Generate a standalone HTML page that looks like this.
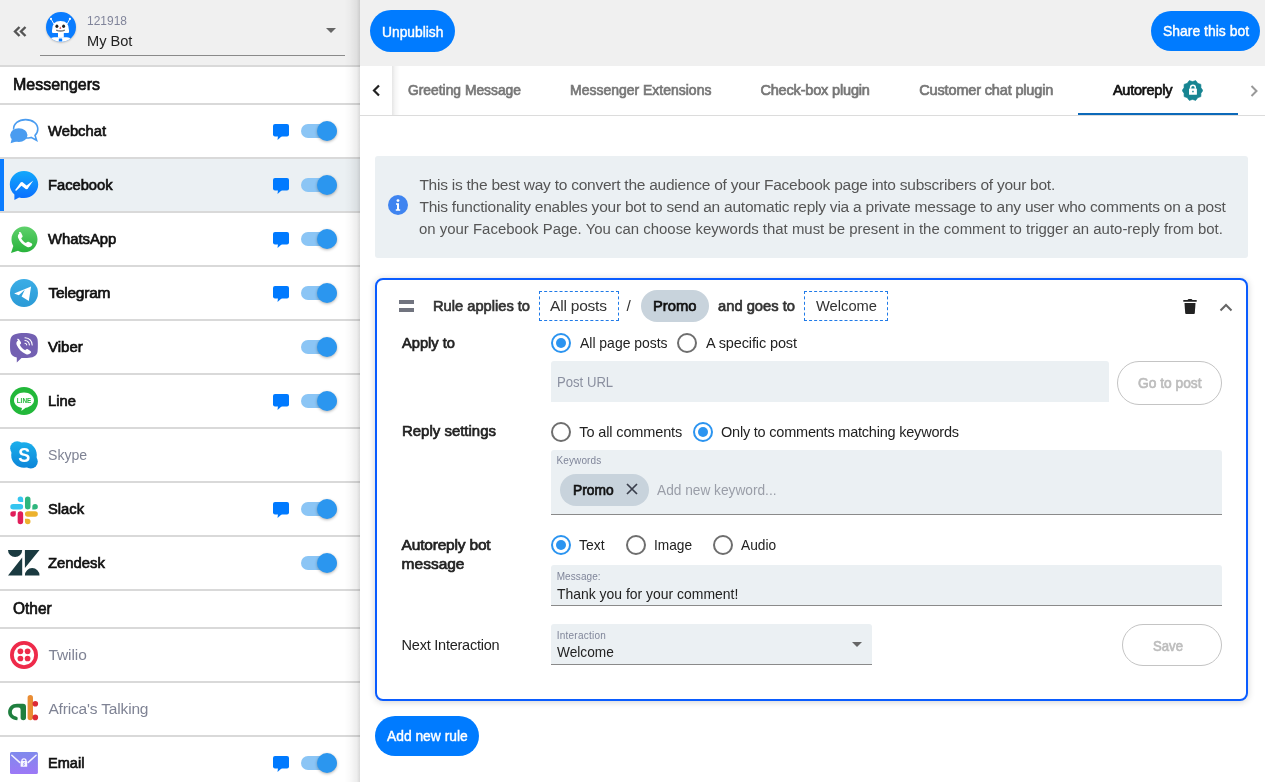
<!DOCTYPE html>
<html><head><meta charset="utf-8"><style>*{box-sizing:border-box;margin:0;padding:0}
html,body{width:1265px;height:782px;overflow:hidden;background:#fff;font-family:"Liberation Sans",sans-serif;color:#222}
.a{position:absolute}
.t{position:absolute;white-space:nowrap;line-height:20px}
#sb{position:absolute;left:0;top:0;width:360px;height:782px;background:#fff;overflow:hidden}
#sbh{position:absolute;left:0;top:0;width:360px;height:67px;background:#f0f0f0;border-bottom:2px solid #d9d9d9}
.sec{position:absolute;left:0;width:360px;height:38px;border-bottom:2px solid #d9d9d9}
.row{position:absolute;left:0;width:360px;height:54px;border-bottom:2px solid #d9d9d9}
.ic{position:absolute;left:8px;top:12px;width:32px;height:30px}
.row.sel{background:#ebf0f3}
.row.sel:before{content:"";position:absolute;left:0;top:0;width:4px;height:52px;background:#0a7cff}
.bub{position:absolute;left:273px;top:19px;width:16px;height:16px}
.tg{position:absolute;left:301px;top:19px;width:36px;height:14px;border-radius:7px;background:#8bc5f5}
.tg:after{content:"";position:absolute;left:16px;top:-3px;width:20px;height:20px;border-radius:50%;background:#2b96ef;box-shadow:0 1px 3px rgba(0,0,0,.3)}
#shade{position:absolute;left:344px;top:0;width:16px;height:782px;background:linear-gradient(to right,rgba(0,0,0,0),rgba(0,0,0,.02) 35%,rgba(0,0,0,.07) 80%,rgba(0,0,0,.15))}
.btn{position:absolute;background:#007bff;border-radius:21px}
.radio{position:absolute;width:20px;height:20px;border-radius:50%;border:2px solid #6e6e6e}
.radio.on{border-color:#2b94f0}
.radio.on:after{content:"";position:absolute;left:3px;top:3px;width:10px;height:10px;border-radius:50%;background:#2b94f0}
.fld{position:absolute;background:#ebf0f3;border-radius:3px 3px 0 0}
.fld.ul{border-bottom:1px solid #8a8a8a}
.ob{position:absolute;border:1px solid #c4c4c4}
</style></head><body>
<div id="root" style="position:absolute;left:0;top:0;width:1265px;height:782px;overflow:hidden;will-change:transform;background:#fff">
<div id="sb"><div id="sbh"></div><svg class="a" style="left:13px;top:26px" width="14" height="11" viewBox="0 0 14 11"><path d="M6.5 1 2 5.5 6.5 10M12.5 1 8 5.5 12.5 10" fill="none" stroke="#555" stroke-width="2.4"/></svg><div class="a" style="left:46px;top:12px;width:30px;height:30px;border-radius:50%;background:#0a7cff;overflow:hidden;box-shadow:0 1px 2px rgba(0,0,0,.2)"><svg width="30" height="30" viewBox="0 0 30 30"><path d="M5 6.9 8 12.2M23.9 6.9 21 12.2" stroke="#fff" stroke-width="0.9"/><circle cx="5" cy="6.9" r="1.1" fill="#fff"/><circle cx="23.9" cy="6.9" r="1.1" fill="#fff"/><path d="M6 18.5Q6 9.1 14.5 9.1Q23 9.1 23 18.5V20Q23 21 22 21H7Q6 21 6 20Z" fill="#fff"/><ellipse cx="10.9" cy="14.3" rx="1.5" ry="1.8" fill="#222"/><ellipse cx="17.6" cy="14.3" rx="1.5" ry="1.8" fill="#222"/><path d="M13.3 16.8 14.3 14.5 15.3 16.8Z" fill="#e8312f"/><path d="M10.2 18.1Q14.5 20 18.8 18.1" stroke="#777" fill="none" stroke-width="1.4"/><rect x="12" y="20.5" width="5.8" height="5" fill="#fff"/><path d="M4.5 31V27Q5 25.2 8 25.2H21Q24 25.2 24.5 27V31Z" fill="#fff"/><rect x="12.8" y="26.5" width="3.4" height="3" rx=".5" fill="#0a7cff"/></svg></div><div class="t" style="left:87.40px;top:11px;font-size:12.4px;color:#80849a;transform:scaleX(0.9662);transform-origin:0 0;">121918</div>
<div class="t" style="left:87.40px;top:31px;font-size:15.5px;color:#222;transform:scaleX(0.9419);transform-origin:0 0;">My Bot</div>
<svg class="a" style="left:326px;top:28px" width="10" height="5" viewBox="0 0 10 5"><path d="M0 0H10L5 5Z" fill="#666"/></svg><div class="a" style="left:40px;top:55px;width:305px;height:1px;background:#8a8a8a"></div><div class="sec" style="top:67px"></div><div class="t" style="left:12.80px;top:74px;font-size:16.5px;color:#111;transform:scaleX(0.9677);transform-origin:0 0;-webkit-text-stroke:0.7px #111;">Messengers</div>
<div class="sec" style="top:591px"></div><div class="t" style="left:12.50px;top:598px;font-size:16.5px;color:#111;transform:scaleX(0.9370);transform-origin:0 0;-webkit-text-stroke:0.7px #111;">Other</div>
<div class="row" style="top:105px"><svg class="ic" viewBox="0 0 32 30"><g transform="translate(0 0.8)"><path d="M5.6 11.8 C5.2 6 10.5 1.8 17.6 1.8 C24.8 1.8 29.8 5.8 29.8 11.3 C29.8 14 28.8 16 27 17.5 L28.6 22.5 L23 19.6 C21.5 20 20 20.2 18 20.2" fill="none" stroke="#4a9cf0" stroke-width="1.6"/><ellipse cx="10.8" cy="17.3" rx="8.7" ry="6.8" fill="#4a9cf0"/><path d="M3.8 21 2.6 25.5 9 23.5Z" fill="#4a9cf0"/></g></svg><svg class="bub" viewBox="0 0 16 16"><rect x="0" y="0" width="16" height="12.5" rx="2" fill="#007aff"/><path d="M5 12 4.5 16 9 12Z" fill="#007aff"/></svg><div class="tg"></div></div><div class="t" style="left:48.40px;top:121px;font-size:15.5px;color:#111;transform:scaleX(0.9524);transform-origin:0 0;-webkit-text-stroke:0.7px #111;">Webchat</div>
<div class="row sel" style="top:159px"><svg class="ic" viewBox="0 0 32 30"><defs><linearGradient id="fb" x1="0" y1="0" x2="0" y2="1"><stop offset="0" stop-color="#12a8fb"/><stop offset="1" stop-color="#0a6cff"/></linearGradient></defs><path d="M16 0C8.1 0 1.8 6 1.8 13.6c0 4 1.8 7.5 4.6 9.9V29l4.7-2.5c1.5.4 3.1.6 4.9.6 7.9 0 14.2-6 14.2-13.5S23.9 0 16 0Z" fill="url(#fb)"/><path d="M7 19.2 12.8 11.3 14.3 11.1 18.6 14.5 25.3 9.6 19.5 17.9 18 18.2 13.5 14.8 8.3 19.7Z" fill="#fff"/></svg><svg class="bub" viewBox="0 0 16 16"><rect x="0" y="0" width="16" height="12.5" rx="2" fill="#007aff"/><path d="M5 12 4.5 16 9 12Z" fill="#007aff"/></svg><div class="tg"></div></div><div class="t" style="left:48.40px;top:175px;font-size:15.5px;color:#111;transform:scaleX(0.9486);transform-origin:0 0;-webkit-text-stroke:0.7px #111;">Facebook</div>
<div class="row" style="top:213px"><svg class="ic" viewBox="0 0 32 30"><defs><linearGradient id="wa" x1="0" y1="0" x2="0" y2="1"><stop offset="0" stop-color="#5fd16c"/><stop offset="1" stop-color="#27b23a"/></linearGradient></defs><path d="M16.5 1.5C9.3 1.5 3.5 7.3 3.5 14.5c0 2.4.7 4.7 1.8 6.6L3 28l7-2.3c1.9 1 4.1 1.6 6.5 1.6 7.2 0 13-5.8 13-13S23.7 1.5 16.5 1.5Z" fill="url(#wa)"/><path d="M10.8 7.5c.9-.7 1.8-.6 2.3.3l1.4 3c.3.7 0 1.4-.6 1.8l-.7.6c1 2.2 2.6 3.8 4.8 4.8l.7-.7c.5-.6 1.2-.8 1.8-.5l3 1.4c.9.5 1 1.4.3 2.3-1.1 1.5-2.9 2-4.6 1.4-4.2-1.6-7.5-4.9-9.1-9.1-.6-1.6 0-3.3 1.4-4.5Z" fill="#fff"/></svg><svg class="bub" viewBox="0 0 16 16"><rect x="0" y="0" width="16" height="12.5" rx="2" fill="#007aff"/><path d="M5 12 4.5 16 9 12Z" fill="#007aff"/></svg><div class="tg"></div></div><div class="t" style="left:48.40px;top:229px;font-size:15.5px;color:#111;transform:scaleX(0.9552);transform-origin:0 0;-webkit-text-stroke:0.7px #111;">WhatsApp</div>
<div class="row" style="top:267px"><svg class="ic" viewBox="0 0 32 30"><defs><linearGradient id="tgr" x1="0" y1="0" x2="0" y2="1"><stop offset="0" stop-color="#3badE6"/><stop offset="1" stop-color="#2b9ad6"/></linearGradient></defs><circle cx="16" cy="14" r="14" fill="url(#tgr)"/><path d="M6.1 14.5 23.1 7.6 20.8 21.9 13.6 17.5 16.8 10.8 10.8 16.2Z" fill="#fff"/></svg><svg class="bub" viewBox="0 0 16 16"><rect x="0" y="0" width="16" height="12.5" rx="2" fill="#007aff"/><path d="M5 12 4.5 16 9 12Z" fill="#007aff"/></svg><div class="tg"></div></div><div class="t" style="left:48.40px;top:283px;font-size:15.5px;color:#111;letter-spacing:-0.243px;-webkit-text-stroke:0.7px #111;">Telegram</div>
<div class="row" style="top:321px"><svg class="ic" viewBox="0 0 32 30"><path d="M16 0C23 0 28.5 1.3 29.5 6 30 8.5 30 16.5 29.5 19 28.6 23.5 24.5 24.8 19 25H13.5L8.8 29.6V24.6C5 23.8 3 22 2.5 19 1.9 16.5 1.9 8.5 2.5 6 3.5 1.3 9 0 16 0Z" fill="#7360b2"/><path d="M9 6.3c.9-.7 1.7-.5 2.2.3l1.7 2.6c.4.7.2 1.4-.3 1.9l-.8.7c1.1 2.5 3 4.4 5.4 5.5l.7-.8c.5-.6 1.2-.8 1.9-.3l2.6 1.7c.8.5.9 1.5.2 2.2-1.1 1.3-2.8 1.8-4.5 1.1-4.3-1.8-7.7-5.2-9.5-9.5-.6-1.6 0-3.3 1.5-4.4Z" fill="#fff"/><path d="M17 4.8c4 .3 6.9 3.2 7.2 7.2M17 7.5c2.4.2 4.2 2 4.4 4.4M17 10.2c1 .1 1.6.7 1.7 1.7" fill="none" stroke="#fff" stroke-width="1.1" stroke-linecap="round"/></svg><div class="tg"></div></div><div class="t" style="left:48.40px;top:337px;font-size:15.5px;color:#111;transform:scaleX(0.9666);transform-origin:0 0;-webkit-text-stroke:0.7px #111;">Viber</div>
<div class="row" style="top:375px"><svg class="ic" viewBox="0 0 32 30"><circle cx="16" cy="14" r="14" fill="#22b83a"/><path d="M16 5.5c-5.5 0-10 3.5-10 7.8 0 3.8 3.4 7 8 7.6l-.7 3 4.4-3.1c4.4-.7 8.3-3.8 8.3-7.5 0-4.3-4.5-7.8-10-7.8Z" fill="#fff"/><text x="16" y="15.6" font-family="Liberation Sans" font-weight="bold" font-size="6.4" text-anchor="middle" fill="#22b83a">LINE</text></svg><svg class="bub" viewBox="0 0 16 16"><rect x="0" y="0" width="16" height="12.5" rx="2" fill="#007aff"/><path d="M5 12 4.5 16 9 12Z" fill="#007aff"/></svg><div class="tg"></div></div><div class="t" style="left:48.40px;top:391px;font-size:15.5px;color:#111;transform:scaleX(0.9522);transform-origin:0 0;-webkit-text-stroke:0.7px #111;">Line</div>
<div class="row" style="top:429px"><svg class="ic" viewBox="0 0 32 30"><defs><linearGradient id="sk" gradientUnits="userSpaceOnUse" x1="0" y1="0" x2="0" y2="28"><stop offset="0" stop-color="#1cb0ec"/><stop offset="1" stop-color="#0c84d8"/></linearGradient></defs><g fill="url(#sk)"><circle cx="16" cy="14" r="12.8"/><circle cx="9.2" cy="7.2" r="7"/><circle cx="22.8" cy="20.6" r="7"/></g><text x="16.2" y="21" font-family="Liberation Sans" font-weight="bold" font-size="20" text-anchor="middle" fill="#fff" transform="translate(16.2 0) scale(0.9 1) translate(-16.2 0)">S</text></svg></div><div class="t" style="left:48.40px;top:445px;font-size:15.5px;color:#7f8394;transform:scaleX(0.9095);transform-origin:0 0;">Skype</div>
<div class="row" style="top:483px"><svg class="ic" viewBox="-4.5 -3 62.5 58.6"><path d="M19.712.133a5.381 5.381 0 0 0-5.376 5.387 5.381 5.381 0 0 0 5.376 5.386h5.376V5.52A5.381 5.381 0 0 0 19.712.133m0 14.365H5.376A5.381 5.381 0 0 0 0 19.884a5.381 5.381 0 0 0 5.376 5.387h14.336a5.381 5.381 0 0 0 5.376-5.387 5.381 5.381 0 0 0-5.376-5.386" fill="#36C5F0"/><path d="M53.76 19.884a5.381 5.381 0 0 0-5.376-5.386 5.381 5.381 0 0 0-5.376 5.386v5.387h5.376a5.381 5.381 0 0 0 5.376-5.387m-14.336 0V5.52A5.381 5.381 0 0 0 34.048.133a5.381 5.381 0 0 0-5.376 5.387v14.364a5.381 5.381 0 0 0 5.376 5.387 5.381 5.381 0 0 0 5.376-5.387" fill="#2EB67D"/><path d="M34.048 54a5.381 5.381 0 0 0 5.376-5.387 5.381 5.381 0 0 0-5.376-5.386h-5.376v5.386A5.381 5.381 0 0 0 34.048 54m0-14.365h14.336a5.381 5.381 0 0 0 5.376-5.386 5.381 5.381 0 0 0-5.376-5.387H34.048a5.381 5.381 0 0 0-5.376 5.387 5.381 5.381 0 0 0 5.376 5.386" fill="#ECB22E"/><path d="M0 34.249a5.381 5.381 0 0 0 5.376 5.386 5.381 5.381 0 0 0 5.376-5.386v-5.387H5.376A5.381 5.381 0 0 0 0 34.249m14.336 0v14.364A5.381 5.381 0 0 0 19.712 54a5.381 5.381 0 0 0 5.376-5.387V34.249a5.381 5.381 0 0 0-5.376-5.387 5.381 5.381 0 0 0-5.376 5.387" fill="#E01E5A"/></svg><svg class="bub" viewBox="0 0 16 16"><rect x="0" y="0" width="16" height="12.5" rx="2" fill="#007aff"/><path d="M5 12 4.5 16 9 12Z" fill="#007aff"/></svg><div class="tg"></div></div><div class="t" style="left:48.40px;top:499px;font-size:15.5px;color:#111;transform:scaleX(0.9500);transform-origin:0 0;-webkit-text-stroke:0.7px #111;">Slack</div>
<div class="row" style="top:537px"><svg class="ic" viewBox="0 0 32 30"><path d="M0 0.9H14.2A7.1 7.1 0 0 1 0 0.9ZM14.2 8.5V26.4H0ZM16.9 0.9H31.5L16.9 19ZM16.9 26.4A7.3 7.3 0 0 1 31.5 26.4Z" fill="#1a3a40"/></svg><div class="tg"></div></div><div class="t" style="left:48.40px;top:553px;font-size:15.5px;color:#111;transform:scaleX(0.9563);transform-origin:0 0;-webkit-text-stroke:0.7px #111;">Zendesk</div>
<div class="row" style="top:629px"><svg class="ic" viewBox="0 0 32 30"><g fill="#ee2a4a"><path fill-rule="evenodd" d="M16 0A14 14 0 1 1 16 28 14 14 0 1 1 16 0ZM16 3.8A10.2 10.2 0 1 0 16 24.2 10.2 10.2 0 1 0 16 3.8Z"/><circle cx="12.4" cy="10.3" r="2.85"/><circle cx="19.6" cy="10.3" r="2.85"/><circle cx="12.4" cy="17.5" r="2.85"/><circle cx="19.6" cy="17.5" r="2.85"/></g></svg></div><div class="t" style="left:48.40px;top:645px;font-size:15.5px;color:#7f8394;letter-spacing:-0.080px;">Twilio</div>
<div class="row" style="top:683px"><svg class="ic" viewBox="0 0 32 30"><path d="M9.3 25.2C4.1 25.2 0.1 21.5 0.1 17C0.1 12.3 4 8.8 9 8.8H15Q18 8.8 18 11.8V22.6Q18 25.2 15.3 25.2Q12.6 25.2 12.6 22.6V14.8Q12.6 12.6 10.5 12.6H8.5C5.8 12.6 3.8 14.5 3.8 17C3.8 19.3 5.6 21.3 8.2 21.5L9.8 22.8Z" fill="#1f7f3f"/><rect x="19.6" y="0" width="5.4" height="25.2" rx="2.7" fill="#ea8d34"/><circle cx="27.3" cy="8.8" r="2.8" fill="#dc2a36"/><circle cx="27.3" cy="22.4" r="2.8" fill="#dc2a36"/></svg></div><div class="t" style="left:48.40px;top:699px;font-size:15.5px;color:#7f8394;letter-spacing:-0.167px;">Africa's Talking</div>
<div class="row" style="top:737px"><svg class="ic" viewBox="0 0 32 30"><defs><linearGradient id="em" x1="0" y1="0" x2="0" y2="1"><stop offset="0" stop-color="#7f8aec"/><stop offset="1" stop-color="#9c78f6"/></linearGradient></defs><rect x="2" y="2.9" width="27.9" height="22" rx="1.5" fill="url(#em)"/><path d="M3.8 6.3 11.6 13.4M28.1 6.3 20.3 13.4" fill="none" stroke="#fff" stroke-width="1.5" stroke-linecap="round" opacity=".9"/><rect x="12.6" y="12.1" width="6.6" height="5.7" rx=".6" fill="#fff" opacity=".92"/><path d="M13.9 12.3V11.9a2.05 2.05 0 0 1 4.1 0v.4" fill="none" stroke="#fff" stroke-width="1.3" opacity=".92"/><path d="M16.6 13.2 15.2 15.2H16.6L15.4 17" fill="none" stroke="#8a80f0" stroke-width=".7"/></svg><svg class="bub" viewBox="0 0 16 16"><rect x="0" y="0" width="16" height="12.5" rx="2" fill="#007aff"/><path d="M5 12 4.5 16 9 12Z" fill="#007aff"/></svg><div class="tg"></div></div><div class="t" style="left:48.40px;top:753px;font-size:15.5px;color:#111;transform:scaleX(0.9381);transform-origin:0 0;-webkit-text-stroke:0.7px #111;">Email</div>
<div id="shade"></div></div>
<div class="a" style="left:360px;top:0;width:905px;height:66px;background:#f0f0f0"></div><div class="btn" style="left:370px;top:10px;width:85px;height:42px"></div><div class="t" style="left:381.60px;top:22px;font-size:15.5px;color:#fff;transform:scaleX(0.8911);transform-origin:0 0;-webkit-text-stroke:0.45px #fff;">Unpublish</div>
<div class="btn" style="left:1151px;top:11px;width:109px;height:40px;border-radius:20px"></div><div class="t" style="left:1162.70px;top:21px;font-size:15.5px;color:#fff;transform:scaleX(0.8996);transform-origin:0 0;-webkit-text-stroke:0.45px #fff;">Share this bot</div>
<div class="a" style="left:360px;top:66px;width:905px;height:50px;background:#fff;border-bottom:1px solid #dcdcdc"></div><div class="a" style="left:392px;top:66px;width:8px;height:49px;background:linear-gradient(to right,rgba(0,0,0,.10),rgba(0,0,0,.04) 40%,rgba(0,0,0,0))"></div><svg class="a" style="left:371px;top:84px" width="10" height="13" viewBox="0 0 10 13"><path d="M8 1.5 3 6.5 8 11.5" fill="none" stroke="#222" stroke-width="2.2"/></svg><div class="t" style="left:407.60px;top:80px;font-size:14.5px;color:#777;transform:scaleX(0.9536);transform-origin:0 0;-webkit-text-stroke:0.7px #777;">Greeting Message</div>
<div class="t" style="left:569.60px;top:80px;font-size:14.5px;color:#777;transform:scaleX(0.9639);transform-origin:0 0;-webkit-text-stroke:0.7px #777;">Messenger Extensions</div>
<div class="t" style="left:760.40px;top:80px;font-size:14.5px;color:#777;letter-spacing:-0.167px;-webkit-text-stroke:0.7px #777;">Check-box plugin</div>
<div class="t" style="left:919.30px;top:80px;font-size:14.5px;color:#777;letter-spacing:-0.158px;-webkit-text-stroke:0.7px #777;">Customer chat plugin</div>
<div class="t" style="left:1112.90px;top:80px;font-size:14.5px;color:#111;letter-spacing:-0.212px;-webkit-text-stroke:0.7px #111;">Autoreply</div>
<svg class="a" style="left:1182px;top:80.2px" width="21" height="21" viewBox="0 0 21 21"><path d="M10.50 1.60 L13.71 0.61 L15.73 3.30 L18.91 4.39 L18.96 7.75 L20.90 10.50 L18.96 13.25 L18.91 16.61 L15.73 17.70 L13.71 20.39 L10.50 19.40 L7.29 20.39 L5.27 17.70 L2.09 16.61 L2.04 13.25 L0.10 10.50 L2.04 7.75 L2.09 4.39 L5.27 3.30 L7.29 0.61Z" fill="#178592" stroke="#178592" stroke-width="0.6" stroke-linejoin="round"/><rect x="7" y="8.6" width="7.9" height="6.2" rx="0.5" fill="#fff"/><path d="M8.6 8.8V7.6a2.35 2.35 0 0 1 4.7 0v1.2" fill="none" stroke="#fff" stroke-width="1.5"/><rect x="10.2" y="10.8" width="1.5" height="1.5" fill="#178592"/></svg><div class="a" style="left:1078px;top:113px;width:160px;height:2px;background:#0c69b9"></div><svg class="a" style="left:1250px;top:85px" width="9" height="12" viewBox="0 0 9 12"><path d="M1.5 1 6.5 6 1.5 11" fill="none" stroke="#999" stroke-width="2"/></svg><div class="a" style="left:375px;top:156px;width:873px;height:102px;background:#ebf0f3;border-radius:3px"></div><svg class="a" style="left:388px;top:195px" width="20" height="20" viewBox="0 0 20 20"><circle cx="10" cy="10" r="10" fill="#3f84f0"/><circle cx="10" cy="5.6" r="1.4" fill="#fff"/><path d="M8 8.3h3v5.9h1.2v1.5H7.8v-1.5H9V9.8H8Z" fill="#fff"/></svg><div class="t" style="left:419.40px;top:175px;font-size:15.5px;color:#555;letter-spacing:-0.245px;">This is the best way to convert the audience of your Facebook page into subscribers of your bot.</div>
<div class="t" style="left:419.40px;top:197px;font-size:15.5px;color:#555;letter-spacing:-0.227px;">This functionality enables your bot to send an automatic reply via a private message to any user who comments on a post</div>
<div class="t" style="left:419.40px;top:219px;font-size:15.5px;color:#555;transform:scaleX(0.9638);transform-origin:0 0;">on your Facebook Page. You can choose keywords that must be present in the comment to trigger an auto-reply from bot.</div>
<div class="a" style="left:375px;top:278px;width:873px;height:423px;border:2px solid #0a5cff;border-radius:8px;box-shadow:0 1px 7px rgba(0,0,0,.18);background:#fff"></div><div class="a" style="left:399px;top:300px;width:15px;height:4px;background:#71747f"></div><div class="a" style="left:399px;top:308px;width:15px;height:4px;background:#71747f"></div><div class="t" style="left:432.70px;top:296px;font-size:15.5px;color:#333;transform:scaleX(0.9463);transform-origin:0 0;-webkit-text-stroke:0.7px #333;">Rule applies to</div>
<div class="a" style="left:539px;top:291px;width:80px;height:30px;border:1px dashed #1f7ae8"></div><div class="t" style="left:550.00px;top:296px;font-size:15.5px;color:#333;letter-spacing:-0.200px;">All posts</div>
<div class="t" style="left:626.50px;top:296px;font-size:15.5px;color:#333;">/</div>
<div class="a" style="left:641px;top:290px;width:68px;height:32px;border-radius:16px;background:#c8d3dc"></div><div class="t" style="left:653.10px;top:296px;font-size:15.5px;color:#111;transform:scaleX(0.9540);transform-origin:0 0;-webkit-text-stroke:0.7px #111;">Promo</div>
<div class="t" style="left:717.80px;top:296px;font-size:15.5px;color:#333;transform:scaleX(0.9506);transform-origin:0 0;-webkit-text-stroke:0.7px #333;">and goes to</div>
<div class="a" style="left:804px;top:291px;width:84px;height:30px;border:1px dashed #1f7ae8"></div><div class="t" style="left:815.50px;top:296px;font-size:15.5px;color:#333;transform:scaleX(0.9487);transform-origin:0 0;">Welcome</div>
<svg class="a" style="left:1183px;top:298px" width="14" height="16" viewBox="0 0 14 16"><path d="M0.3 2H4.5L5.5 1H8.5L9.5 2H13.7V3.8H0.3Z" fill="#222"/><path d="M1.5 5H12.5L11.8 15.2Q11.7 16 10.8 16H3.2Q2.3 16 2.2 15.2Z" fill="#222"/></svg><svg class="a" style="left:1219px;top:302px" width="14" height="10" viewBox="0 0 14 10"><path d="M1.5 8.5 7 3 12.5 8.5" fill="none" stroke="#666" stroke-width="2"/></svg><div class="t" style="left:401.60px;top:333px;font-size:15.5px;color:#222;transform:scaleX(0.9464);transform-origin:0 0;-webkit-text-stroke:0.7px #222;">Apply to</div>
<div class="radio on" style="left:551px;top:333px"></div><div class="t" style="left:579.60px;top:333px;font-size:14.5px;color:#222;transform:scaleX(0.9616);transform-origin:0 0;">All page posts</div>
<div class="radio" style="left:677px;top:333px"></div><div class="t" style="left:706.00px;top:333px;font-size:14.5px;color:#222;letter-spacing:-0.121px;">A specific post</div>
<div class="fld" style="left:551px;top:361px;width:558px;height:41px"></div><div class="t" style="left:556.70px;top:372px;font-size:14.5px;color:#8b90a0;transform:scaleX(0.9050);transform-origin:0 0;">Post URL</div>
<div class="ob" style="left:1117px;top:361px;width:105px;height:44px;border-radius:22px"></div><div class="t" style="left:1138.00px;top:373px;font-size:14.5px;color:#bdbdbd;transform:scaleX(0.9492);transform-origin:0 0;-webkit-text-stroke:0.7px #bdbdbd;">Go to post</div>
<div class="t" style="left:401.60px;top:421px;font-size:15.5px;color:#222;transform:scaleX(0.9651);transform-origin:0 0;-webkit-text-stroke:0.7px #222;">Reply settings</div>
<div class="radio" style="left:551px;top:422px"></div><div class="t" style="left:579.30px;top:422px;font-size:14.5px;color:#222;letter-spacing:-0.129px;">To all comments</div>
<div class="radio on" style="left:693px;top:422px"></div><div class="t" style="left:721.00px;top:422px;font-size:14.5px;color:#222;letter-spacing:-0.212px;">Only to comments matching keywords</div>
<div class="fld ul" style="left:551px;top:450px;width:671px;height:65px"></div><div class="t" style="left:556.50px;top:451px;font-size:10px;color:#80869a;letter-spacing:0.114px;">Keywords</div>
<div class="a" style="left:560px;top:474px;width:89px;height:32px;border-radius:16px;background:#c8d3dc"></div><div class="t" style="left:572.70px;top:480px;font-size:14.5px;color:#111;transform:scaleX(0.9508);transform-origin:0 0;-webkit-text-stroke:0.7px #111;">Promo</div>
<svg class="a" style="left:626px;top:483px" width="12" height="12" viewBox="0 0 12 12"><path d="M1 1 11 11M11 1 1 11" stroke="#3a3f4c" stroke-width="1.7"/></svg><div class="t" style="left:657.30px;top:480px;font-size:14.5px;color:#9a9ea8;transform:scaleX(0.9447);transform-origin:0 0;">Add new keyword...</div>
<div class="t" style="left:401.60px;top:535px;font-size:15.5px;color:#222;letter-spacing:-0.192px;-webkit-text-stroke:0.7px #222;">Autoreply bot</div>
<div class="t" style="left:401.60px;top:554px;font-size:15.5px;color:#222;-webkit-text-stroke:0.7px #222;">message</div>
<div class="radio on" style="left:551px;top:535px"></div><div class="t" style="left:579.30px;top:535px;font-size:14.5px;color:#222;transform:scaleX(0.9586);transform-origin:0 0;">Text</div>
<div class="radio" style="left:626px;top:535px"></div><div class="t" style="left:654.00px;top:535px;font-size:14.5px;color:#222;transform:scaleX(0.9454);transform-origin:0 0;">Image</div>
<div class="radio" style="left:713px;top:535px"></div><div class="t" style="left:741.00px;top:535px;font-size:14.5px;color:#222;transform:scaleX(0.9461);transform-origin:0 0;">Audio</div>
<div class="fld ul" style="left:551px;top:565px;width:671px;height:41px"></div><div class="t" style="left:556.70px;top:567px;font-size:10px;color:#80869a;letter-spacing:0.086px;">Message:</div>
<div class="t" style="left:556.70px;top:584px;font-size:14.5px;color:#222;transform:scaleX(0.9613);transform-origin:0 0;">Thank you for your comment!</div>
<div class="t" style="left:401.60px;top:635px;font-size:14.5px;color:#222;letter-spacing:-0.233px;">Next Interaction</div>
<div class="fld ul" style="left:551px;top:624px;width:321px;height:41px"></div><div class="t" style="left:556.70px;top:626px;font-size:10px;color:#80869a;letter-spacing:0.240px;">Interaction</div>
<div class="t" style="left:556.70px;top:642px;font-size:14.5px;color:#222;transform:scaleX(0.9435);transform-origin:0 0;">Welcome</div>
<svg class="a" style="left:852px;top:642px" width="10" height="5" viewBox="0 0 10 5"><path d="M0 0H10L5 5Z" fill="#666"/></svg><div class="ob" style="left:1122px;top:624px;width:100px;height:42px;border-radius:21px"></div><div class="t" style="left:1153.00px;top:636px;font-size:14.5px;color:#bdbdbd;transform:scaleX(0.9063);transform-origin:0 0;-webkit-text-stroke:0.7px #bdbdbd;">Save</div>
<div class="btn" style="left:375px;top:716px;width:104px;height:40px;border-radius:20px"></div><div class="t" style="left:386.60px;top:726px;font-size:15.5px;color:#fff;transform:scaleX(0.8917);transform-origin:0 0;-webkit-text-stroke:0.45px #fff;">Add new rule</div>
</div></body></html>
